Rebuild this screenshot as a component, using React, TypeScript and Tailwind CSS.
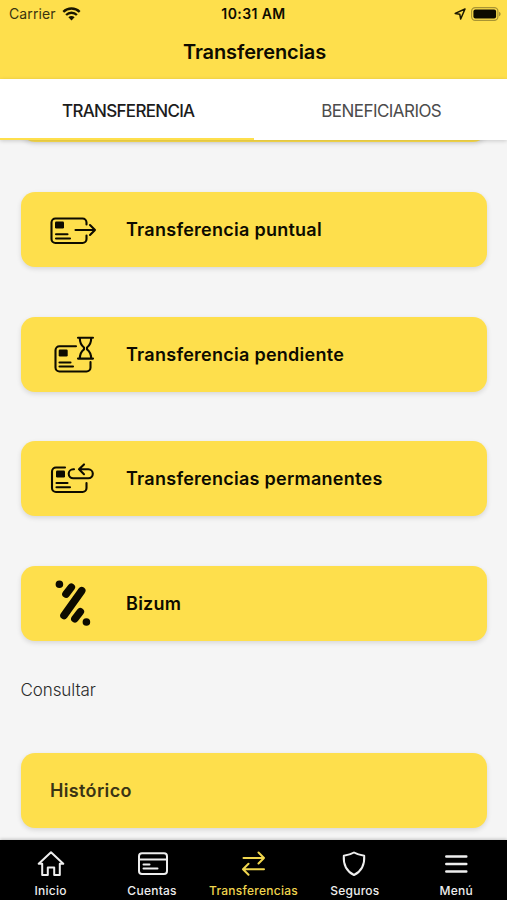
import React from 'react';
import clsx from 'clsx';

const PuntualIcon = () => (
  <svg width="60" height="75" viewBox="0 0 60 75" fill="none" stroke="#0d0b00" strokeWidth="2.1" strokeLinecap="round" strokeLinejoin="round">
    <path d="M45.5 32.5V30.5a4 4 0 0 0-4-4h-27a4 4 0 0 0-4 4V47a4 4 0 0 0 4 4h27a4 4 0 0 0 4-4V43.5" />
    <rect x="14" y="29.6" width="9" height="6.8" rx="1.2" fill="#0d0b00" stroke="none" />
    <path d="M15 42.3h11.5M15 46.5h14" />
    <path d="M34.5 38H54M49 33l5 5-5 5" />
  </svg>
);

const PendienteIcon = () => (
  <svg width="60" height="75" viewBox="0 0 60 75" fill="none" stroke="#0d0b00" strokeWidth="2.1" strokeLinecap="round" strokeLinejoin="round">
    <path d="M35 29.3H18.5a4 4 0 0 0-4 4V50.5a4 4 0 0 0 4 4H45.5a4 4 0 0 0 4-4V45" />
    <rect x="17.7" y="32.6" width="9" height="6.8" rx="1.2" fill="#0d0b00" stroke="none" />
    <path d="M18.5 45.5h11M18.5 49.5h13.5" />
    <path d="M37 20.8h15M37 41.6h15M38.8 21c0 5.5 1.5 7.5 4.2 9.5v1.8c-2.7 2-4.2 4-4.2 9.500M50.2 21c0 5.5-1.5 7.5-4.2 9.5v1.8c2.7 2 4.2 4 4.2 9.5" />
  </svg>
);

const PermanenteIcon = () => (
  <svg width="60" height="75" viewBox="0 0 60 75" fill="none" stroke="#0d0b00" strokeWidth="2.1" strokeLinecap="round" strokeLinejoin="round">
    <path d="M24 26.5H15a4 4 0 0 0-4 4V47a4 4 0 0 0 4 4H41.5a4 4 0 0 0 4-4V42" />
    <rect x="15" y="29.6" width="9" height="6.8" rx="1.2" fill="#0d0b00" stroke="none" />
    <path d="M15.5 42h11M15.5 46.3h13.5" />
    <path d="M33 28.3h-.8a4.5 4.5 0 0 0 0 9H47.3a4.5 4.5 0 0 0 0-9H38M43 23.4l-5 4.9 5 4.9" />
  </svg>
);

const BizumIcon = () => (
  <svg width="60" height="75" viewBox="0 0 60 75" fill="none" stroke="#0d0b00" strokeWidth="7.6" strokeLinecap="round">
    <path d="M18.4 18.300h.01M30.3 21.2l-5.3 6.9M40.7 24.7L23 49.5M39.3 45.8l-5.4 7M45.4 56h.01" />
  </svg>
);

const WifiIcon = () => (
  <svg width="19" height="14" viewBox="0 0 19 14" fill="none" stroke="#1a1700" strokeWidth="2.3">
    <path d="M1.3 4.9a11.6 11.6 0 0 1 16.4 0M4.1 8a7.6 7.6 0 0 1 10.8 0" />
    <path d="M9.5 13.4L6.4 10.3a4.4 4.4 0 0 1 6.2 0z" fill="#1a1700" stroke="none" />
  </svg>
);

const actions = [
  { label: 'Transferencia puntual', Icon: PuntualIcon },
  { label: 'Transferencia pendiente', Icon: PendienteIcon },
  { label: 'Transferencias permanentes', Icon: PermanenteIcon },
  { label: 'Bizum', Icon: BizumIcon },
];

const navItems = [
  {
    label: 'Inicio',
    icon: <path d="M15 2.300L27.300 13.800H23.800V25H18.200V17.600H11.800V25H6.200V13.800H2.700z" />,
  },
  {
    label: 'Cuentas',
    icon: (
      <>
        <rect x="1" y="3.3" width="28" height="20.6" rx="3" />
        <path d="M1 9.6h28M5.5 14.6h6M5.5 18.5h14" />
      </>
    ),
  },
  {
    label: 'Transferencias',
    active: true,
    icon: <path d="M4.5 8h20.5M19.500 2.500l5.500 5.500-5.500 5.500M25 19.200H4.300M9.500 13.700L4 19.200l5.500 5.500" />,
  },
  {
    label: 'Seguros',
    icon: <path d="M14 2.500c3.500 2.200 6.500 2.700 10.200 3.200.6 9-2.200 15.300-10.200 19.300C6 21 3.200 14.700 3.800 5.700 7.500 5.200 10.500 4.700 14 2.500z" />,
  },
  { label: 'Menú', icon: <path d="M4.300 6.500h20M4.300 14h20M4.300 21.500h20" strokeWidth="2.500" /> },
];

const App: React.FC = () => {
  return (
    <div className="flex flex-col w-[507px] h-[900px] overflow-hidden bg-[#f5f5f5] font-['Inter',sans-serif] text-[#0d0b00]">
      {/* Status bar and title */}
      <header className="h-[79px] shrink-0 bg-[#fedf4c]">
        <div className="grid grid-cols-3 items-center h-[27px] px-[9px] text-[14px] leading-none">
          <div className="flex items-center gap-[6px] text-[#3a340f]">
            <span className="tracking-[0.1px]">Carrier</span>
            <WifiIcon />
          </div>
          <span className="pt-[1px] text-center font-semibold text-[14px] tracking-[0.4px] whitespace-nowrap">10:31 AM</span>
          <div className="flex items-center justify-end gap-[5px] -mr-[3px]">
            <svg width="12" height="12" viewBox="0 0 12 12" fill="none" stroke="#1a1700" strokeWidth="1.5" strokeLinejoin="round">
              <path d="M11 1L1.2 5.4l4.6.9.9 4.7z" />
            </svg>
            <svg width="30" height="14" viewBox="0 0 30 14">
              <rect x=".6" y=".6" width="26.3" height="12.8" rx="3.6" fill="none" stroke="#a89433" strokeWidth="1.2" />
              <rect x="2.4" y="2.4" width="22.7" height="9.2" rx="2" fill="#0d0b00" />
              <path d="M28 4.7c2.2.8 2.2 3.8 0 4.6z" fill="#a89433" />
            </svg>
          </div>
        </div>
        <h1 className="pt-[11px] pl-[2px] text-center text-[20px] leading-[28px] font-semibold tracking-[-0.1px]">Transferencias</h1>
      </header>

      {/* Tabs */}
      <div className="relative z-10 grid grid-cols-2 h-[61px] shrink-0 bg-white shadow-[0_1px_4px_rgba(0,0,0,0.18)]">
        <button className="pt-[7px] pl-[3px] border-b-2 border-[#fedf4c] text-[17px] font-medium tracking-[-0.7px] text-[#1c1c1c]">
          TRANSFERENCIA
        </button>
        <button className="pt-[5px] pl-[2px] text-[17px] tracking-[-0.55px] text-[#4c4c4c]">BENEFICIARIOS</button>
      </div>

      {/* Scrolled content */}
      <main className="flex-1 min-h-0 overflow-hidden px-[20.5px]">
        <div className="flex flex-col gap-[49.6px] -mt-[72.6px]">
          <div className="h-[75px] shrink-0 rounded-[14px] bg-[#fedf4c] shadow-[0_2px_5px_rgba(0,0,0,0.12)]" />
          {actions.map(({ label, Icon }) => (
            <button
              key={label}
              className="flex items-center gap-[25.5px] h-[75px] shrink-0 pl-[20px] rounded-[14px] bg-[#fedf4c] text-left shadow-[0_2px_5px_rgba(0,0,0,0.12)]"
            >
              <Icon />
              <span className="text-[18px] font-semibold tracking-[0.26px] whitespace-nowrap">{label}</span>
            </button>
          ))}
        </div>
        <h2 className="pt-[36px] h-[112.2px] text-[17px] leading-[26px] font-light tracking-[-0.1px] text-[#2b2b2b]">Consultar</h2>
        <button className="flex items-center w-full h-[75px] pl-[29.5px] rounded-[14px] bg-[#fedf4c] text-[18px] font-semibold tracking-[0.35px] text-[#3a3414] shadow-[0_2px_5px_rgba(0,0,0,0.12)]">
          Histórico
        </button>
      </main>

      {/* Bottom navigation */}
      <nav className="grid grid-cols-5 h-[60px] shrink-0 bg-black shadow-[0_-1px_3px_rgba(0,0,0,0.2)]">
        {navItems.map(({ label, icon, active }) => (
          <a key={label} className={clsx('flex flex-col items-center pt-[10px]', active ? 'text-[#f0d64e]' : 'text-[#eeeeee]')}>
            <svg
              width="29"
              height="28"
              viewBox="0 0 29 28"
              fill="none"
              stroke="currentColor"
              strokeWidth="2"
              strokeLinecap="round"
              strokeLinejoin="round"
              className="overflow-visible"
            >
              {icon}
            </svg>
            <span className="mt-[5px] text-[12px] leading-[16px] font-medium tracking-[0.25px] whitespace-nowrap">{label}</span>
          </a>
        ))}
      </nav>
    </div>
  );
};

export default App;
